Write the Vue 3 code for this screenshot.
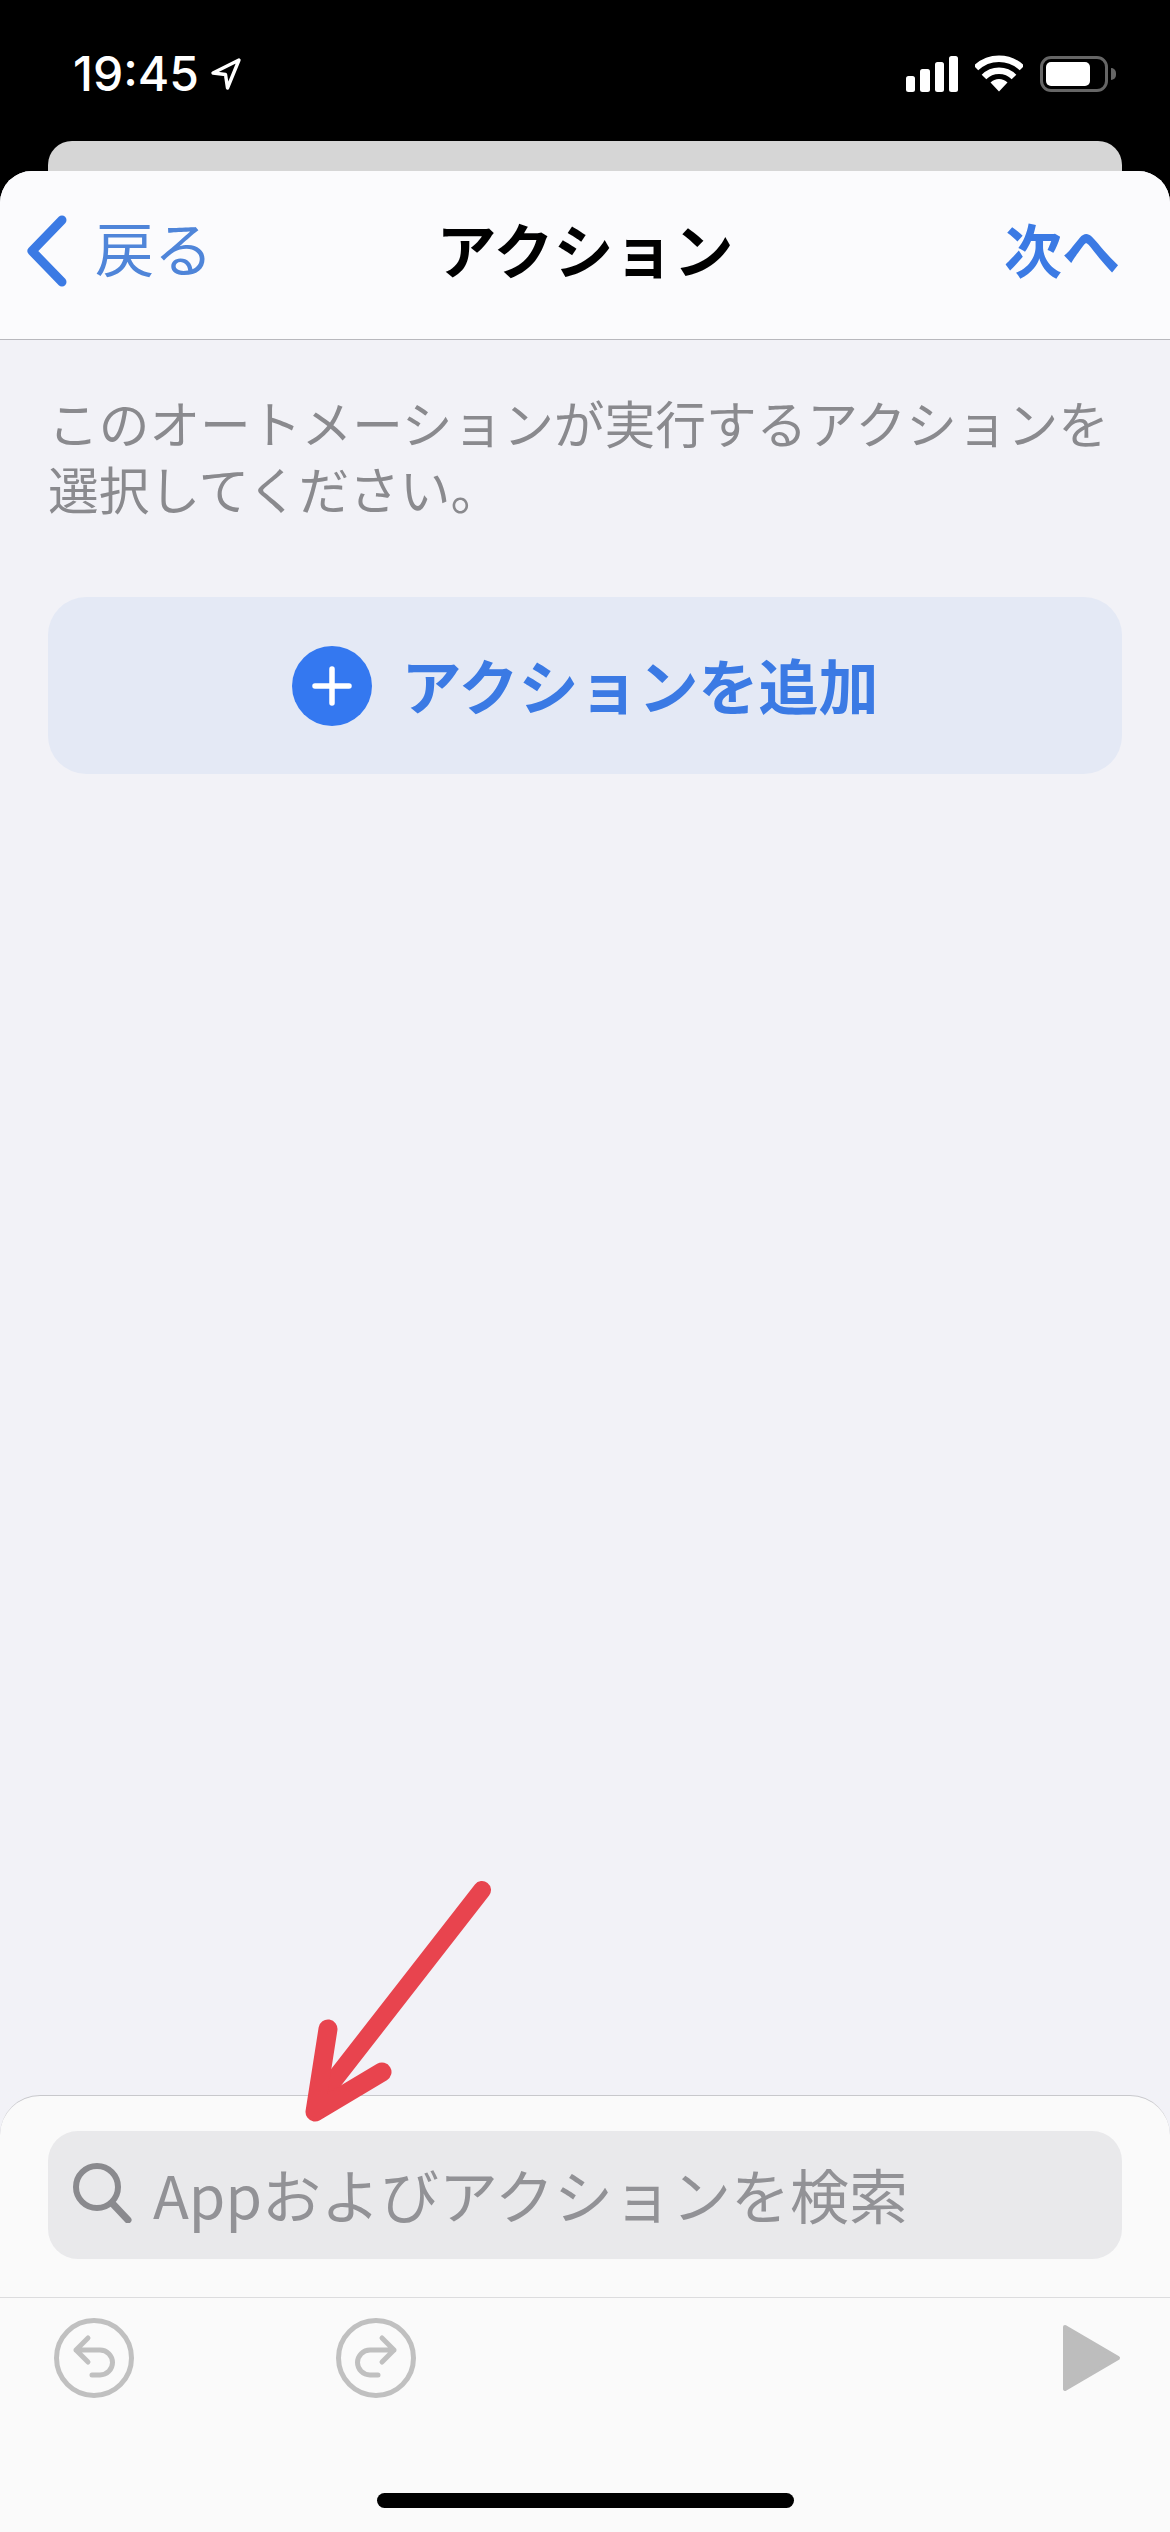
<template>
  <div class="screen">
    <header class="status">
      <div class="status-left">
        <span class="time">19:45</span>
        <svg class="loc" width="32" height="34" viewBox="0 0 32 34">
          <path d="M29 3 L3 16 L15.5 17.5 L17.5 31 Z" fill="none" stroke="#fff" stroke-width="3.4" stroke-linejoin="round" />
        </svg>
      </div>
      <div class="status-right">
        <div class="signal">
          <i v-for="h in bars" :key="h" class="bar" :style="{ height: h + 'px' }"></i>
        </div>
        <svg width="48" height="37" viewBox="0 0 48 37">
          <path d="M1 13 A33 33 0 0 1 47 13" fill="none" stroke="#fff" stroke-width="6.5" />
          <path d="M9 22 A21 21 0 0 1 39 22" fill="none" stroke="#fff" stroke-width="6.5" />
          <path d="M24 36.5 L15.5 27.5 A12 12 0 0 1 32.5 27.5 Z" fill="#fff" />
        </svg>
        <div class="battery">
          <div class="battery-body"><div class="battery-level"></div></div>
          <div class="battery-nub"></div>
        </div>
      </div>
    </header>
    <div class="peek"></div>

    <div class="sheet">
      <nav class="nav">
        <div class="nav-back">
          <svg width="42" height="72" viewBox="0 0 42 72">
            <path d="M36 5 L6 36 L36 67" fill="none" stroke="#3b7ae4" stroke-width="9" stroke-linecap="round" stroke-linejoin="round" />
          </svg>
          <span>戻る</span>
        </div>
        <div class="nav-title">アクション</div>
        <div class="nav-next">次へ</div>
      </nav>

      <main class="body">
        <p class="desc">このオートメーションが実行するアクションを選択してください。</p>
        <div class="add-btn">
          <div class="plus">
            <svg width="40" height="40" viewBox="0 0 40 40">
              <path d="M20 3 V37 M3 20 H37" stroke="#fff" stroke-width="5.5" stroke-linecap="round" />
            </svg>
          </div>
          <span>アクションを追加</span>
        </div>
      </main>

      <section class="dock">
        <div class="search-wrap">
          <div class="search">
            <svg width="60" height="60" viewBox="0 0 60 60">
              <circle cx="24" cy="24" r="21" fill="none" stroke="#8a8a8e" stroke-width="6" />
              <path d="M39 40 L55 57" stroke="#8a8a8e" stroke-width="7" stroke-linecap="round" />
            </svg>
            <span>Appおよびアクションを検索</span>
          </div>
        </div>
        <div class="toolbar">
          <div class="history">
            <svg width="80" height="80" viewBox="0 0 80 80">
              <circle cx="40" cy="40" r="37.5" fill="none" stroke="#c0c0c0" stroke-width="5" />
              <path d="M34 20 L22 32 L34 44 M22 32 H46 A12.5 12.5 0 0 1 46 57 H38" fill="none" stroke="#c0c0c0" stroke-width="5" stroke-linecap="round" stroke-linejoin="round" />
            </svg>
            <svg width="80" height="80" viewBox="0 0 80 80">
              <circle cx="40" cy="40" r="37.5" fill="none" stroke="#c0c0c0" stroke-width="5" />
              <path d="M46 20 L58 32 L46 44 M58 32 H34 A12.5 12.5 0 0 0 34 57 H42" fill="none" stroke="#c0c0c0" stroke-width="5" stroke-linecap="round" stroke-linejoin="round" />
            </svg>
          </div>
          <svg width="60" height="70" viewBox="0 0 60 70">
            <path d="M3 4 L56 35 L3 66 Z" fill="#bdbdbd" stroke="#bdbdbd" stroke-width="4" stroke-linejoin="round" />
          </svg>
        </div>
        <div class="home-bar"></div>
      </section>
    </div>

    <!-- red annotation arrow drawn over the screenshot -->
    <svg class="arrow" width="200" height="256" viewBox="0 0 200 256">
      <path d="M186 18 L24 226" fill="none" stroke="#e8444e" stroke-width="18" stroke-linecap="round" />
      <path d="M32 157 L19 240 L86 200" fill="none" stroke="#e8444e" stroke-width="19" stroke-linecap="round" stroke-linejoin="round" />
    </svg>
  </div>
</template>

<script setup>
const bars = [16, 23, 30, 36]
</script>

<style>
html, body {
  margin: 0;
  background: #000;
}
</style>

<style scoped>
.screen {
  position: relative;
  width: 1170px;
  height: 2532px;
  background: #000;
  display: flex;
  flex-direction: column;
  overflow: hidden;
  font-family: "Noto Sans CJK JP", "Noto Sans", sans-serif;
}

.status {
  height: 141px;
  box-sizing: border-box;
  padding: 55px 54px 0 73px;
  display: flex;
  justify-content: space-between;
  align-items: flex-start;
  flex-shrink: 0;
}

.status-left {
  display: flex;
  align-items: center;
  gap: 11px;
  height: 38px;
}

.time {
  font-family: Inter, Roboto, sans-serif;
  font-size: 48px;
  font-weight: 500;
  line-height: 38px;
  color: #fff;
}

.status-right {
  display: flex;
  align-items: flex-end;
  gap: 17px;
  height: 37px;
}

.signal {
  display: flex;
  align-items: flex-end;
  gap: 5px;
  width: 52px;
}

.bar {
  display: block;
  width: 9.5px;
  background: #fff;
  border-radius: 2.5px;
}

.battery {
  display: flex;
  align-items: center;
  gap: 3px;
}

.battery-body {
  box-sizing: border-box;
  width: 68px;
  height: 36px;
  border: 3px solid #666;
  border-radius: 11px;
  padding: 3px;
}

.battery-level {
  width: 44px;
  height: 24px;
  background: #fff;
  border-radius: 5px;
}

.battery-nub {
  width: 5px;
  height: 12px;
  background: #666;
  border-radius: 0 6px 6px 0;
}

.peek {
  height: 30px;
  margin: 0 48px;
  background: #d6d6d6;
  border-radius: 24px 24px 0 0;
  flex-shrink: 0;
}

.sheet {
  flex: 1;
  display: flex;
  flex-direction: column;
  background: #f2f2f7;
  border-radius: 32px 32px 0 0;
  overflow: hidden;
}

.nav {
  position: relative;
  height: 169px;
  box-sizing: border-box;
  flex-shrink: 0;
  display: flex;
  align-items: center;
  justify-content: space-between;
  padding: 0 50px 9px 26px;
  background: #fbfbfd;
  border-bottom: 1.5px solid #b8b8bd;
}

.nav-back {
  display: flex;
  align-items: center;
  gap: 27px;
  font-size: 59px;
  color: #4f85d9;
  line-height: 72px;
}

.nav-back span {
  padding-bottom: 8px;
}

.nav-title {
  position: absolute;
  left: 0;
  right: 0;
  text-align: center;
  font-size: 60px;
  font-weight: 700;
  color: #000;
  padding-bottom: 6px;
  pointer-events: none;
}

.nav-next {
  font-size: 58px;
  font-weight: 700;
  color: #3b7ae4;
  padding-bottom: 6px;
}

.body {
  flex: 1;
  padding: 49px 48px 0;
}

.desc {
  margin: 0;
  font-size: 50.7px;
  line-height: 66px;
  color: #8a8a8e;
}

.add-btn {
  margin-top: 76px;
  height: 177px;
  background: #e4e9f5;
  border-radius: 38px;
  display: flex;
  align-items: center;
  justify-content: center;
  gap: 30px;
  font-size: 60px;
  font-weight: 700;
  color: #3b7ae4;
}

.add-btn span {
  padding-bottom: 5px;
}

.plus {
  width: 80px;
  height: 80px;
  border-radius: 50%;
  background: #3478f0;
  display: flex;
  align-items: center;
  justify-content: center;
}

.dock {
  height: 437px;
  flex-shrink: 0;
  box-sizing: border-box;
  display: flex;
  flex-direction: column;
  background: #fafafa;
  border-radius: 40px 40px 0 0;
  border-top: 1.5px solid #c8c8cc;
}

.search-wrap {
  height: 202px;
  box-sizing: border-box;
  padding: 35px 48px 0;
  border-bottom: 1.5px solid #dcdcde;
  flex-shrink: 0;
}

.search {
  height: 128px;
  box-sizing: border-box;
  background: #e9e9eb;
  border-radius: 30px;
  display: flex;
  align-items: center;
  gap: 20px;
  padding: 0 0 4px 25px;
  font-size: 59px;
  color: #929296;
}

.toolbar {
  height: 125px;
  box-sizing: border-box;
  display: flex;
  align-items: center;
  justify-content: space-between;
  padding: 0 48px 6px 54px;
}

.history {
  display: flex;
  gap: 202px;
}

.home-bar {
  width: 417px;
  height: 15px;
  margin: 70px auto 0;
  background: #000;
  border-radius: 8px;
}

.arrow {
  position: absolute;
  left: 296px;
  top: 1872px;
}
</style>
